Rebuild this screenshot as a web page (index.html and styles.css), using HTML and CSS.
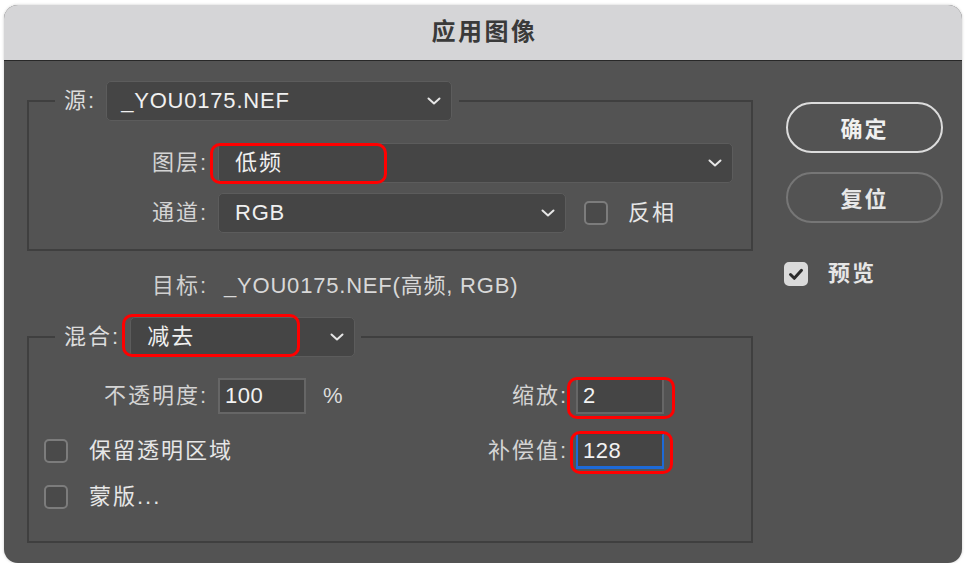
FILE: index.html
```html
<!DOCTYPE html>
<html lang="zh">
<head>
<meta charset="utf-8">
<title>应用图像</title>
<link rel="stylesheet" href="styles.css">
</head>
<body>
<div class="window">
  <div class="titlebar"><span class="title">应用图像</span></div>
  <div class="content">
    <div class="left">
      <fieldset class="group group-source">
        <legend class="legend legend-source">
          <span class="lbl zh">源:</span>
          <div class="select sel-source">
            <span class="val">_YOU0175.NEF</span>
            <svg class="chev" width="14" height="8" viewBox="0 0 14 8"><path d="M1.5 1.5l5.5 5 5.5-5" fill="none" stroke="#e6e6e6" stroke-width="2" stroke-linecap="round" stroke-linejoin="round"/></svg>
          </div>
        </legend>
        <div class="frow">
          <span class="flabel zh">图层:</span>
          <div class="select sel-layer">
            <span class="val zh">低频</span>
            <svg class="chev" width="14" height="8" viewBox="0 0 14 8"><path d="M1.5 1.5l5.5 5 5.5-5" fill="none" stroke="#e6e6e6" stroke-width="2" stroke-linecap="round" stroke-linejoin="round"/></svg>
            <span class="mark mark-layer"></span>
          </div>
        </div>
        <div class="frow frow-2">
          <span class="flabel zh">通道:</span>
          <div class="select sel-channel">
            <span class="val">RGB</span>
            <svg class="chev" width="14" height="8" viewBox="0 0 14 8"><path d="M1.5 1.5l5.5 5 5.5-5" fill="none" stroke="#e6e6e6" stroke-width="2" stroke-linecap="round" stroke-linejoin="round"/></svg>
          </div>
          <span class="check check-invert"></span>
          <span class="checklabel zh">反相</span>
        </div>
      </fieldset>

      <div class="target">
        <span class="tlabel zh">目标:</span>
        <span class="tval">_YOU0175.NEF(高频, RGB)</span>
      </div>

      <fieldset class="group group-blend">
        <legend class="legend legend-blend">
          <span class="lbl zh">混合:</span>
          <div class="select sel-blend">
            <span class="val zh">减去</span>
            <svg class="chev" width="14" height="8" viewBox="0 0 14 8"><path d="M1.5 1.5l5.5 5 5.5-5" fill="none" stroke="#e6e6e6" stroke-width="2" stroke-linecap="round" stroke-linejoin="round"/></svg>
            <span class="mark mark-blend"></span>
          </div>
        </legend>
        <div class="brow">
          <span class="flabel zh">不透明度:</span>
          <div class="input">100</div>
          <span class="pct">%</span>
          <div class="rgroup">
            <span class="zh rlabel">缩放:</span>
            <div class="input input-scale">2<span class="mark mark-scale"></span></div>
          </div>
        </div>
        <div class="brow brow-2">
          <span class="check check-left"></span>
          <span class="checklabel zh">保留透明区域</span>
          <div class="rgroup">
            <span class="zh rlabel">补偿值:</span>
            <div class="input input-focus">128<span class="mark mark-offset"></span></div>
          </div>
        </div>
        <div class="brow brow-3">
          <span class="check check-left"></span>
          <span class="checklabel zh">蒙版...</span>
        </div>
      </fieldset>
    </div>

    <div class="right">
      <div class="btn btn-ok zh">确定</div>
      <div class="btn btn-reset zh">复位</div>
      <div class="preview">
        <span class="check checked">
          <svg width="24" height="24" viewBox="0 0 24 24"><path d="M6.5 12.5l3.8 3.8 7.2-8" fill="none" stroke="#2b2b2b" stroke-width="3" stroke-linecap="round" stroke-linejoin="round"/></svg>
        </span>
        <span class="checklabel zh">预览</span>
      </div>
    </div>
  </div>
</div>
</body>
</html>
```

FILE: styles.css
```css
* { box-sizing: border-box; }

html, body {
  margin: 0;
  padding: 0;
  background: #ffffff;
}

body {
  font-family: "Liberation Sans", "Noto Sans CJK SC", sans-serif;
  font-size: 22px;
  line-height: 26px;
  color: #d8d8d8;
}

.window {
  margin: 5px 0 0 4px;
  width: 958px;
  height: 558px;
  border-radius: 14px;
  overflow: hidden;
  background: #535353;
  box-shadow: 0 0 3px rgba(0, 0, 0, 0.22);
}

.titlebar {
  height: 56px;
  background: #d5d5d7;
  border-bottom: 1px solid #282828;
  display: flex;
  align-items: center;
  justify-content: center;
  padding-bottom: 6px;
}

.title {
  font-family: "Noto Sans CJK SC", sans-serif;
  font-weight: 700;
  font-size: 24px;
  line-height: 30px;
  letter-spacing: 2.5px;
  color: #3a3a3a;
  padding-left: 3px;
}

.zh { letter-spacing: 2px; }

.content {
  display: flex;
  padding: 20px 0 0 23px;
  gap: 33px;
}

.left {
  width: 726px;
  display: flex;
  flex-direction: column;
}

.group {
  margin: 0;
  min-inline-size: 0;
  border: 2px solid #3f3f3f;
  padding: 0;
}

.group-source { padding: 22px 0 16px 0; }
.group-blend { padding: 21px 0 26px 0; margin-top: 16px; }

.legend {
  margin-left: 26px;
  display: flex;
  align-items: center;
  gap: 10px;
  height: 40px;
}

.legend-source { padding: 0 7px 0 9px; }
.legend-blend { padding: 0 6px 0 9px; }

.lbl { color: #dcdcdc; }

.select {
  position: relative;
  height: 40px;
  background: #454545;
  border: 1px solid #5c5c5c;
  border-radius: 5px;
  display: flex;
  align-items: center;
  justify-content: space-between;
  padding: 0 10px 0 16px;
  color: #f0f0f0;
}

.val { letter-spacing: 0.8px; }
.val.zh { letter-spacing: 2px; }

.sel-source { width: 346px; padding-left: 14px; }
.sel-layer { width: 515px; }
.sel-channel { width: 348px; }
.sel-blend { width: 225px; }

.chev { flex: none; }

.frow {
  display: flex;
  align-items: center;
  height: 40px;
}

.frow-2 { margin-top: 10px; }

.flabel {
  width: 179px;
  text-align: right;
  margin-right: 10px;
  color: #d4d4d4;
  white-space: nowrap;
}

.check {
  flex: none;
  width: 24px;
  height: 24px;
  border: 2px solid #7c7c7c;
  border-radius: 5px;
  background: #4a4a4a;
}

.check-invert { margin-left: 18px; }

.checklabel {
  margin-left: 20px;
  color: #e6e6e6;
}

.target {
  margin-top: 20px;
  height: 30px;
  display: flex;
  align-items: center;
}

.tlabel {
  width: 181px;
  text-align: right;
  color: #d0d0d0;
}

.tval {
  margin-left: 16px;
  color: #d8d8d8;
  letter-spacing: 0.8px;
}

.brow {
  display: flex;
  align-items: center;
  height: 36px;
  padding-right: 87px;
}

.brow-2 { margin-top: 19px; }
.brow-3 { margin-top: 10px; }

.brow .check-left { margin-left: 15px; }
.brow .checklabel { margin-left: 21px; }

.input {
  position: relative;
  width: 88px;
  height: 36px;
  background: #454545;
  border: 2px solid #666666;
  padding-left: 5px;
  display: flex;
  align-items: center;
  color: #f2f2f2;
  letter-spacing: 0.5px;
}

.input-scale {
  border-top-color: #4a4a4a;
}

.input-focus {
  border-color: #1d6ad8;
  border-top-color: #434343;
  border-bottom-width: 3px;
}

.pct {
  margin-left: 17px;
  color: #dcdcdc;
}

.rgroup {
  margin-left: auto;
  display: flex;
  align-items: center;
}

.rlabel {
  margin-right: 8px;
  color: #d4d4d4;
}

.mark {
  position: absolute;
  border: 3px solid #ff0000;
  border-radius: 10px;
  pointer-events: none;
}

.mark-layer { left: -9px; top: -1px; width: 177px; height: 41px; }
.mark-blend { left: -9px; top: -4px; width: 178px; height: 43px; }
.mark-scale { left: -11px; top: -3px; width: 108px; height: 42px; }
.mark-offset { left: -8px; top: -4px; width: 103px; height: 43px; }

.right {
  width: 157px;
  padding-top: 21px;
  display: flex;
  flex-direction: column;
}

.btn {
  height: 51px;
  border-radius: 26px;
  display: flex;
  align-items: center;
  justify-content: center;
  font-weight: 700;
  color: #f0f0f0;
  font-family: "Noto Sans CJK SC", sans-serif;
  padding-bottom: 2px;
}

.btn-ok { border: 2px solid #dcdcdc; }
.btn-reset { border: 2px solid #767676; margin-top: 19px; color: #e8e8e8; }

.preview {
  margin-top: 38px;
  display: flex;
  align-items: center;
  margin-left: -2px;
}

.check.checked {
  background: #dadada;
  border-color: #dadada;
  display: flex;
  align-items: center;
  justify-content: center;
}

.check.checked svg { flex: none; }

.preview .checklabel { margin-left: 20px; font-weight: 700; }
```
